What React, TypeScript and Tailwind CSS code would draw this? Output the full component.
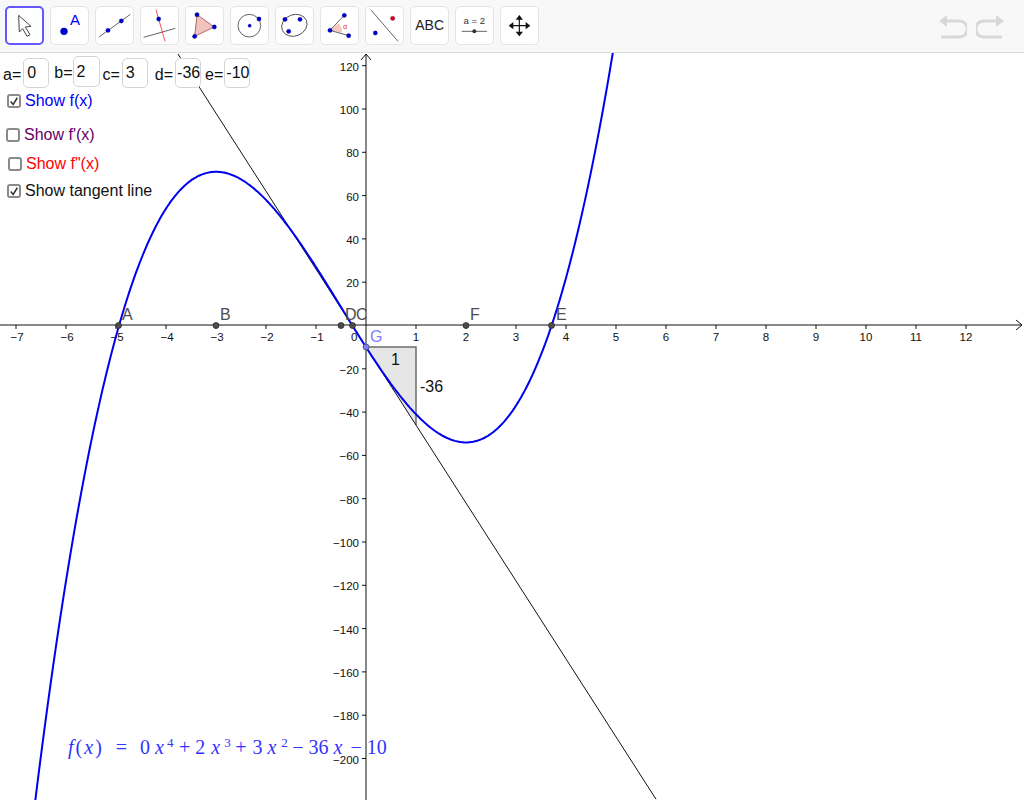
import { ReactNode } from "react";

const X0 = 366;
const Y0 = 325.5;
const SX = 50;
const SY = 2.165;
const px = (x: number) => X0 + x * SX;
const py = (y: number) => Y0 - y * SY;
const f = (x: number) => 2 * x ** 3 + 3 * x ** 2 - 36 * x - 10;

function curve() {
  const pts: string[] = [];
  for (let x = -6.7; x <= 5.2; x += 0.02) {
    pts.push(`${px(x).toFixed(1)},${py(f(x)).toFixed(1)}`);
  }
  return "M" + pts.join("L");
}

const xTicks = [-7, -6, -5, -4, -3, -2, -1, 1, 2, 3, 4, 5, 6, 7, 8, 9, 10, 11, 12];
const yTicks = [120, 100, 80, 60, 40, 20, -20, -40, -60, -80, -100, -120, -140, -160, -180, -200];
const points = [
  { n: "A", x: 118.5, lx: 122 },
  { n: "B", x: 216, lx: 220 },
  { n: "D", x: 341, lx: 345 },
  { n: "C", x: 352.5, lx: 356 },
  { n: "F", x: 466, lx: 470 },
  { n: "E", x: 551.5, lx: 556 },
];

function ToolButton({ box, active, children }: { box: string; active?: boolean; children: ReactNode }) {
  return (
    <button
      className={
        active
          ? "h-[39px] w-[39px] shrink-0 rounded-[5px] border-2 border-[#6557ff] bg-white"
          : "h-[39px] w-[39px] shrink-0 rounded-[5px] border border-[#e4e4e4] bg-white"
      }
    >
      <svg viewBox={box} className={active ? "-m-[2px] block h-[39px] w-[39px]" : "-m-px block h-[39px] w-[39px]"}>
        {children}
      </svg>
    </button>
  );
}

const Dot = ({ x, y, r = 6.5, c = "#0000cc" }: { x: number; y: number; r?: number; c?: string }) => (
  <circle cx={x} cy={y} r={r} fill={c} stroke="#00006a" strokeWidth={0.8} />
);

function Toolbar() {
  return (
    <header className="flex h-[53px] shrink-0 items-start gap-[6px] border-b border-[#dcdcdc] bg-[#f8f8f8] pl-[5.4px] pt-[6px]">
      <ToolButton box="17 19 117 117" active>
        <path d="M58 47L95 80L78 82L92 105L83 110L70 87L60 97Z" fill="#fff" stroke="#444" strokeWidth={3} />
      </ToolButton>
      <ToolButton box="151 19 117 117">
        <circle cx={193} cy={95} r={11} fill="#0000cc" />
        <text x={211} y={76} fontSize={45} fill="#0000ff">A</text>
      </ToolButton>
      <ToolButton box="286 19 117 117">
        <path d="M298 112L392 44" stroke="#444" strokeWidth={2.5} />
        <Dot x={325} y={92} />
        <Dot x={365} y={64} />
      </ToolButton>
      <ToolButton box="421 19 117 117">
        <path d="M432 113L527 86" stroke="#444" strokeWidth={2.5} />
        <path d="M469 30L496 125" stroke="#f03030" strokeWidth={2.5} />
        <Dot x={477} y={58} />
      </ToolButton>
      <ToolButton box="556 19 117 117">
        <path d="M592 45L644 82L585 110Z" fill="#f0c4bc" stroke="#a05050" strokeWidth={2.5} />
        <Dot x={592} y={45} />
        <Dot x={644} y={82} />
        <Dot x={585} y={110} />
      </ToolButton>
      <ToolButton box="691 19 117 117">
        <circle cx={749} cy={78} r={34} fill="none" stroke="#444" strokeWidth={2.5} />
        <Dot x={750} y={78} r={5} />
        <Dot x={778} y={58} />
      </ToolButton>
      <ToolButton box="17 19 117 117">
        <ellipse cx={75} cy={77} rx={39} ry={32} transform="rotate(-22 75 77)" fill="none" stroke="#444" strokeWidth={2.5} />
        <Dot x={47} y={59} />
        <Dot x={92} y={59} />
        <Dot x={58} y={95} />
      </ToolButton>
      <ToolButton box="152 19 117 117">
        <path d="M182 92L208 71A42 42 0 0 1 218 99Z" fill="#f5c8c0" />
        <path d="M225 47L182 92L238 108" fill="none" stroke="#444" strokeWidth={2.5} />
        <text x={221} y={87} fontSize={22} fill="#f03030">α</text>
        <Dot x={225} y={47} />
        <Dot x={182} y={92} />
        <Dot x={238} y={108} />
      </ToolButton>
      <ToolButton box="287 19 117 117">
        <path d="M305 31L386 125" stroke="#444" strokeWidth={2.5} />
        <Dot x={370} y={56} c="#e00000" />
        <Dot x={318} y={100} />
      </ToolButton>
      <ToolButton box="422 19 117 117">
        <text x={481} y={92} textAnchor="middle" fontSize={42} fill="#222">ABC</text>
      </ToolButton>
      <ToolButton box="557 19 117 117">
        <text x={615} y={74} textAnchor="middle" fontSize={29} fill="#333">a = 2</text>
        <path d="M577 95L653 95" stroke="#666" strokeWidth={3} />
        <circle cx={615} cy={95} r={6} fill="#333" />
      </ToolButton>
      <ToolButton box="692 19 117 117">
        <path d="M750 55V101M727 78H773" stroke="#111" strokeWidth={3.5} />
        <path d="M750 46L761 60H739ZM750 110L761 96H739ZM718 78L732 67V89ZM783 78L769 67V89Z" fill="#111" />
      </ToolButton>
      <div className="ml-auto mr-[20px] mt-[9px] flex gap-[9px]">
        <svg viewBox="0 0 28 24" className="h-[24px] w-[28px]" fill="none">
          <path d="M0 6L8 0V12Z" fill="#d8d8d8" />
          <path d="M7 6H20C31 6 31 22 20 22H2" stroke="#d8d8d8" strokeWidth={3} />
        </svg>
        <svg viewBox="0 0 28 24" className="h-[24px] w-[28px]" fill="none">
          <path d="M28 6L20 0V12Z" fill="#d8d8d8" />
          <path d="M21 6H8C-3 6 -3 22 8 22H26" stroke="#d8d8d8" strokeWidth={3} />
        </svg>
      </div>
    </header>
  );
}

function Graph() {
  return (
    <svg viewBox="0 53 1024 747" className="absolute inset-0 h-full w-full" fontFamily="'Liberation Sans', sans-serif">
      <path d="M366 347H416V425Z" fill="#e6e6e6" />
      <path d="M366 347H416V425" fill="none" stroke="#6e6e6e" strokeWidth={1.5} />
      <path d={`M${px(-3.76)} ${py(125.4)}L${px(5.8)} ${py(-218.8)}`} stroke="#111" strokeWidth={1} />
      <path d="M0 325H1022M1016 320L1022 325L1016 330" fill="none" stroke="#111" strokeWidth={1} />
      <path d="M366 800V54M361 60L366 54L371 60" fill="none" stroke="#111" strokeWidth={1} />
      {xTicks.map((t) => (
        <g key={t}>
          <path d={`M${px(t)} 325V329`} stroke="#111" />
          <text x={px(t) + (t < 0 ? 1 : 0)} y={341} textAnchor="middle" fontSize={11.5} fill="#111">
            {t < 0 ? `−${-t}` : t}
          </text>
        </g>
      ))}
      <text x={351} y={341} fontSize={11.5} fill="#111">0</text>
      {yTicks.map((t) => (
        <g key={t}>
          <path d={`M362 ${py(t)}H366`} stroke="#111" />
          <text x={359} y={py(t) + 5} textAnchor="end" fontSize={11.5} fill="#111">
            {t < 0 ? `−${-t}` : t}
          </text>
        </g>
      ))}
      <path d={curve()} fill="none" stroke="#0000f0" strokeWidth={2} />
      {points.map((p) => (
        <g key={p.n}>
          <circle cx={p.x} cy={325.5} r={3} fill="#4d4d4d" stroke="#222" strokeWidth={0.7} />
          <text x={p.lx} y={320} fontSize={16} fill="#4d4d4d">{p.n}</text>
        </g>
      ))}
      <circle cx={366} cy={347} r={3} fill="#7d7dff" stroke="#444" strokeWidth={0.7} />
      <text x={370} y={342} fontSize={16} fill="#7d7dff">G</text>
      <text x={391} y={365} fontSize={16} fill="#111">1</text>
      <text x={420} y={392} fontSize={16} fill="#111">-36</text>
    </svg>
  );
}

function Coefficients() {
  return (
    <div className="absolute left-[3px] top-[3px] flex items-start text-[16px] text-[#111]">
      <span className="mt-[7px]">a=</span>
      <span className="ml-[2px] mt-[2px] flex h-[30px] w-[26px] items-center rounded-[5px] border border-[#d4d4d4] bg-white pl-[3px]">0</span>
      <span className="ml-[5px] mt-[5px]">b=</span>
      <span className="flex h-[31px] w-[27px] items-center rounded-[5px] border border-[#d4d4d4] bg-white pl-[3px]">2</span>
      <span className="ml-[3px] mt-[7px]">c=</span>
      <span className="ml-[2px] mt-[2px] flex h-[30px] w-[26px] items-center rounded-[5px] border border-[#d4d4d4] bg-white pl-[3px]">3</span>
      <span className="ml-[7px] mt-[7px]">d=</span>
      <span className="ml-[2px] mt-[2px] flex h-[30px] w-[26px] items-center rounded-[5px] border border-[#d4d4d4] bg-white pl-[1px]">-36</span>
      <span className="ml-[4px] mt-[7px]">e=</span>
      <span className="ml-[1px] mt-[2px] flex h-[30px] w-[26px] items-center rounded-[5px] border border-[#d4d4d4] bg-white pl-[1px]">-10</span>
    </div>
  );
}

function Check({ className, color, checked, label }: { className: string; color: string; checked?: boolean; label: string }) {
  return (
    <div className={`absolute flex items-center gap-[4px] text-[16px] ${className}`}>
      <span className="flex h-[14px] w-[14px] items-center justify-center rounded-[3px] border-2 border-[#8a8a8a] bg-white">
        {checked && (
          <svg viewBox="0 0 12 12" className="h-[11px] w-[11px]" fill="none">
            <path d="M2 6L5 9.5L10 1.5" stroke="#333" strokeWidth={1.8} />
          </svg>
        )}
      </span>
      <span className={color}>{label}</span>
    </div>
  );
}

function Formula() {
  return (
    <div className="absolute left-[68px] top-[679px] whitespace-nowrap font-['Liberation_Serif',serif] text-[20px] text-[#3333ff]">
      <span className="tracking-[2px]"><i>f</i>(<i>x</i>)</span>
      <span className="ml-[12px]">=</span>
      <span className="ml-[13px]">0</span>
      <i className="ml-[5px]">x</i>
      <sup className="relative -top-[7px] ml-[3px] align-baseline text-[13px]">4</sup>
      <span className="ml-[5.5px]">+</span>
      <span className="ml-[5px]">2</span>
      <i className="ml-[6px]">x</i>
      <sup className="relative -top-[7px] ml-[4px] align-baseline text-[13px]">3</sup>
      <span className="ml-[4.5px]">+</span>
      <span className="ml-[6px]">3</span>
      <i className="ml-[5px]">x</i>
      <sup className="relative -top-[7px] ml-[5px] align-baseline text-[13px]">2</sup>
      <span className="ml-[4.5px]">−</span>
      <span className="ml-[5px]">36</span>
      <i className="ml-[5px]">x</i>
      <span className="ml-[8px]">−</span>
      <span className="ml-[5px]">10</span>
    </div>
  );
}

export default function App() {
  return (
    <div className="flex h-[800px] w-[1024px] flex-col overflow-hidden bg-white font-['Liberation_Sans',sans-serif]">
      <Toolbar />
      <main className="relative flex-1">
        <Graph />
        <Coefficients />
        <Check className="left-[7px] top-[36px]" color="text-[#0000ff]" checked label="Show f(x)" />
        <Check className="left-[6px] top-[70px]" color="text-[#660066]" label="Show f'(x)" />
        <Check className="left-[8px] top-[99px]" color="text-[#ff0000]" label={'Show f"(x)'} />
        <Check className="left-[7px] top-[126px]" color="text-[#111]" checked label="Show tangent line" />
        <Formula />
      </main>
    </div>
  );
}
